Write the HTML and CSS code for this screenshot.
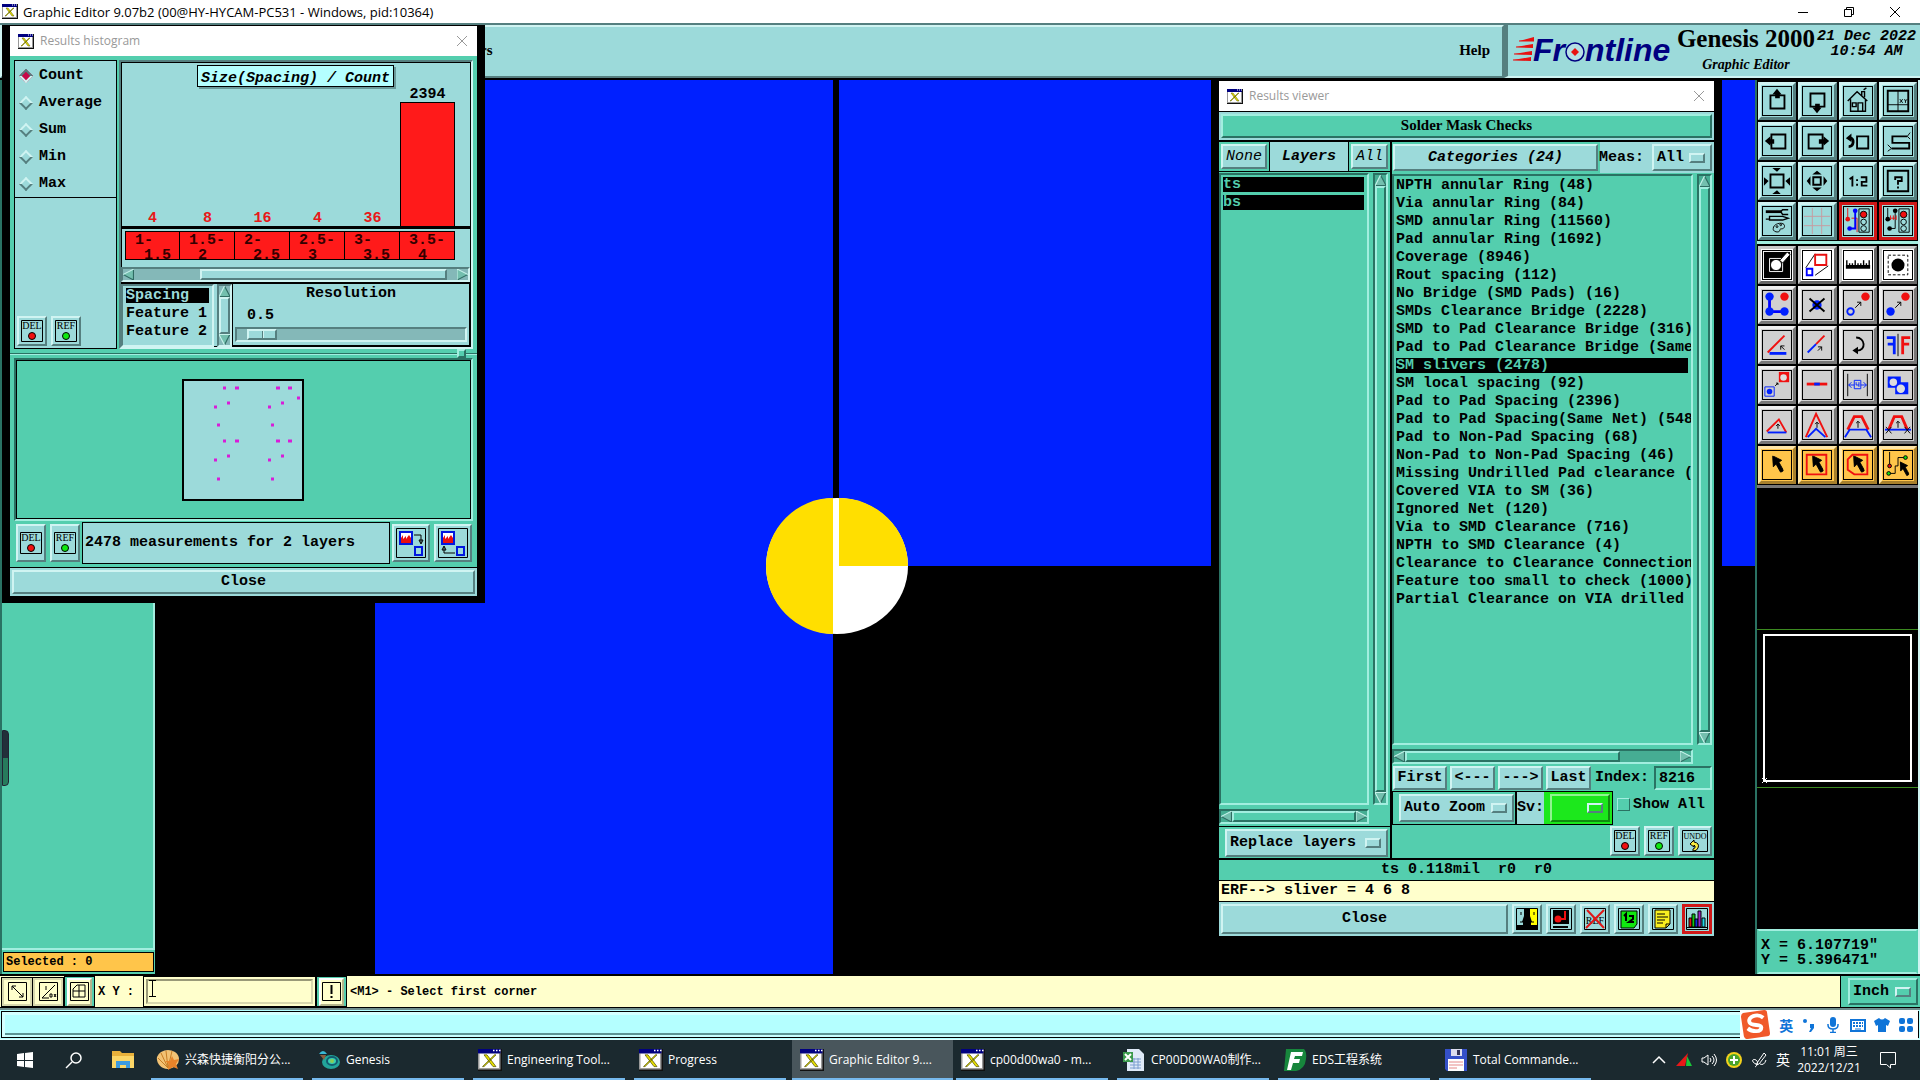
FILE: index.html
```html
<!DOCTYPE html>
<html lang="en">
<head>
    <meta charset="UTF-8">
    <meta name="viewport" content="width=device-width, initial-scale=1.0">
    <title>Graphic Editor</title>
    <link rel="stylesheet" href="styles.css">
</head>
<body>
    <!-- shared symbols -->
    <svg class="defs" aria-hidden="true">
        <symbol id="app" viewBox="0 0 16 15">
            <path d="M0 0h16v15H0z" fill="#111"/><path d="M0 0h15v14H0z" fill="#999"/><path d="M1 3h13v10H1z" fill="#fff"/>
            <path d="M0 0h15v3H0z" fill="#000080"/><path d="M10 1h1m1 0h1m1 0h1" stroke="#fff"/>
            <path d="M4 4h2l6 8h-2zM11 4h1l-8 8H3z" fill="#e8e000" stroke="#555500" stroke-width=".5"/>
        </symbol>
        <symbol id="x" viewBox="0 0 12 12"><path d="M1 1l10 10M11 1L1 11" stroke="currentColor" fill="none"/></symbol>
        <symbol id="del" viewBox="0 0 24 24">
            <path d="M1.500 1.500h21v21h-21z" fill="none" stroke="#000"/><text x="12" y="10" class="mini">DEL</text>
            <circle cx="12" cy="17" r="3.500" fill="#f01010" stroke="#000"/>
        </symbol>
        <symbol id="ref" viewBox="0 0 24 24">
            <path d="M1.500 1.500h21v21h-21z" fill="none" stroke="#000"/><text x="12" y="10" class="mini">REF</text>
            <circle cx="12" cy="17" r="3.500" fill="#10e810" stroke="#000"/>
        </symbol>
        <symbol id="up" viewBox="0 0 10 10"><path d="M5 0l5 10H0z" fill="#73bfae"/><path d="M0 9.500h10L5 0" stroke="#2f6b62" fill="none"/><path d="M5 0L0 10" stroke="#c8f3ec"/></symbol>
        <symbol id="down" viewBox="0 0 10 10"><path d="M5 10L0 0h10z" fill="#73bfae"/><path d="M10 0L5 10" stroke="#2f6b62"/><path d="M5 10L0 .5h10" stroke="#c8f3ec" fill="none"/></symbol>
        <symbol id="left" viewBox="0 0 10 10"><path d="M0 5l10-5v10z" fill="#73bfae"/><path d="M9.500 0v10L0 5" stroke="#2f6b62" fill="none"/><path d="M0 5l10-5" stroke="#c8f3ec"/></symbol>
        <symbol id="right" viewBox="0 0 10 10"><path d="M10 5L0 0v10z" fill="#73bfae"/><path d="M10 5L0 10" stroke="#2f6b62"/><path d="M0 10V0l10 5" stroke="#c8f3ec" fill="none"/></symbol>
        <symbol id="arrow" viewBox="0 0 12 18"><path d="M0 0l10 5-3 2 5 9-3 2-5-9-3 3z" fill="#000"/></symbol>
    </svg>

    <header class="titlebar">
        <svg class="app-icon"><use href="#app"/></svg>
        <span>Graphic Editor 9.07b2 (00@HY-HYCAM-PC531 - Windows, pid:10364)</span>
        <div class="win-buttons">
            <button aria-label="Minimize"><svg width="12" height="12"><path d="M1 6.500h10" stroke="#000"/></svg></button>
            <button aria-label="Restore"><svg width="12" height="12"><path d="M1.500 3.500h7v7h-7zM3.500 3V1.500h7v7H9" fill="none" stroke="#000"/></svg></button>
            <button aria-label="Close"><svg width="12" height="12"><use href="#x"/></svg></button>
        </div>
    </header>

    <div class="topbar">
        <nav class="menubar">
            <a href="#">rs</a>
            <a href="#">Help</a>
        </nav>
        <div class="brand">
            <svg class="logo" viewBox="0 0 162 40">
                <path d="M6 9l15-4v4zM3 15l17-3v4zM1 22l18-3v4zM0 28l18-3v4z" fill="#e81010"/>
                <path d="M6 9h15M3 15h17M1 22h18M0 28h18" stroke="#e81010"/>
                <text x="20" y="29" class="logo-text">Fr</text>
                <text x="72" y="29" class="logo-text">ntline</text>
                <circle cx="62" cy="20" r="9" fill="#b6dfe4" stroke="#000080" stroke-width="1.500"/>
                <path d="M62 16l4 4-4 4-4-4z" fill="#e81010"/>
            </svg>
            <div class="product"><strong>Genesis 2000</strong><em>Graphic Editor</em></div>
            <div class="date"><span>21 Dec 2022</span><span>10:54 AM</span></div>
        </div>
    </div>

    <main class="workspace">
        <aside class="layer-panel">
            <div class="layer-list"><i class="pill"></i></div>
            <div class="selected">Selected : 0</div>
        </aside>

        <svg class="board" viewBox="155 80 1600 894" preserveAspectRatio="xMidYMid slice">
            <path d="M155 80h1600v894H155z" fill="#000"/>
            <path d="M375 80h458v894H375zM839 80h916v486H839z" fill="#0020ff"/>
            <ellipse cx="837" cy="566" rx="71" ry="68" fill="#fff"/>
            <path d="M833 498v136a67 68 0 0 1 0-136zM839 498a69 68 0 0 1 69 68h-69z" fill="#ffdf00"/>
        </svg>

        <aside class="tool-panel">
            <div class="tools">
                <button class="tool" aria-label="Pan up"><svg viewBox="0 0 30 30"><path d="M8 9h15v14H8z" stroke-width="2"/><path d="M10 8l5-6 5 6h-2v4h-5V8z" class="k"/></svg></button>
                <button class="tool" aria-label="Pan down"><svg viewBox="0 0 30 30"><path d="M8 7h15v14H8z" stroke-width="2"/><path d="M10 22l5 6 5-6h-2v-4h-5v4z" class="k"/></svg></button>
                <button class="tool" aria-label="Home"><svg viewBox="0 0 30 30"><path d="M4 15L14 5l11 10M7 13v13h16V13M9 17h4v4H9zM15 26v-9h5v9M19 9V5h3v6M21 3l3-2" stroke-width="1.500"/></svg></button>
                <button class="tool" aria-label="Zoom XY"><svg viewBox="0 0 30 30"><path d="M4 4h22v22H4z" stroke-width="2"/><path d="M15 4v22M4 19h22M17 13l3 4m0-4l-3 4M22 13l1 2 2-2m-2 2v2"/></svg></button>
                <button class="tool" aria-label="Pan left"><svg viewBox="0 0 30 30"><path d="M9 8h15v15H9z" stroke-width="2"/><path d="M8 10l-6 5 6 5v-2h4v-5H8z" class="k"/></svg></button>
                <button class="tool" aria-label="Pan right"><svg viewBox="0 0 30 30"><path d="M6 8h15v15H6z" stroke-width="2"/><path d="M22 10l6 5-6 5v-2h-5v-5h5z" class="k"/></svg></button>
                <button class="tool" aria-label="Previous view"><svg viewBox="0 0 30 30"><path d="M14 10h12v13H14z" stroke-width="2"/><path d="M5 12h2c4 0 4 9-2 9" stroke-width="3"/><path d="M2 12l6-5v9z" class="k"/></svg></button>
                <button class="tool" aria-label="Serpentine"><svg viewBox="0 0 30 30"><path d="M25 10H9v7h18v6H8" stroke-width="2"/><path d="M25 10l3-4m-3 4l3 3M8 23l-4-4m4 4l-4 3"/></svg></button>
                <button class="tool" aria-label="Zoom out"><svg viewBox="0 0 30 30"><path d="M8 8h14v14H8z" stroke-width="2"/><path d="M10 1h9l-4 4zM10 29h9l-4-4zM1 11v9l5-5zM29 11v9l-5-5z" class="k"/></svg></button>
                <button class="tool" aria-label="Zoom in"><svg viewBox="0 0 30 30"><path d="M11 11h8v8h-8z" stroke-width="2"/><path d="M10 8l5-4 5 4zM10 22l5 4 5-4zM8 10l-4 5 4 5zM22 10l4 5-4 5z" class="k"/></svg></button>
                <button class="tool" aria-label="Zoom 1:2"><svg viewBox="0 0 30 30"><path d="M6 13l3-2v10M14 13v2m0 3v2M18 11h6v5h-5v4h6" stroke-width="2"/></svg></button>
                <button class="tool" aria-label="Query"><svg viewBox="0 0 30 30"><path d="M4 4h22v22H4zM12 14v-3h7v4h-4v4m0 2v2" stroke-width="2"/></svg></button>
                <button class="tool" aria-label="Setup"><svg viewBox="0 0 30 30"><path d="M3 5h17" stroke-width="3"/><path d="M27 3h-6l-2 2 2 3h6M3 13h4v-3h14l6 2-6 2H7v-2" stroke-width="1.500"/><path d="M11 23c0-6 13-8 12-2-1 4-5 1-5 4 0 3-8 2-7-2z"/><circle cx="15" cy="21" r="1"/><circle cx="19" cy="19" r="1"/></svg></button>
                <button class="tool" aria-label="Grid"><svg viewBox="0 0 30 30"><path d="M10 1v28M20 1v28M1 10h28M1 20h28" stroke="#c89a9e"/></svg></button>
                <button class="tool on" aria-label="Snap"><svg viewBox="0 0 30 30"><path d="M4 1v12M8 12h6v15" stroke="#e81010"/><path d="M12 4v19H7" stroke="#00f" stroke-width="2"/><circle cx="4" cy="13" r="2.500" fill="#e81010" stroke="none"/><circle cx="12" cy="4" r="2.500" fill="#00f" stroke="none"/><circle cx="6" cy="23" r="2.500" fill="#00f" stroke="none"/><path d="M16 2h11v25H16z"/><circle cx="21" cy="8" r="3.500" fill="#f01010"/><circle cx="21" cy="16" r="3"/><circle cx="21" cy="23" r="3"/></svg></button>
                <button class="tool on" aria-label="Online DRC"><svg viewBox="0 0 30 30"><path d="M4 1v12M12 4v19H6"/><path d="M7 12h6M7 9v5M10 9v5M13 9v5" stroke="#e81010"/><circle cx="4" cy="13" r="2.500" class="k"/><circle cx="12" cy="4" r="2.500" class="k"/><circle cx="6" cy="23" r="2.500" class="k"/><path d="M16 2h11v25H16z"/><circle cx="21" cy="8" r="3.500" fill="#f01010"/><circle cx="21" cy="16" r="3"/><circle cx="21" cy="23" r="3"/></svg></button>
            </div>
            <div class="tools edit">
                <button class="tool white" aria-label="Negative"><svg viewBox="0 0 30 30"><path d="M1 1h28v28H1z" class="k"/><path d="M7 8h14v14H7z" stroke="#fff"/><path d="M18 10l8-9 3 3-8 9z" fill="#fff"/><circle cx="14" cy="15" r="6" fill="#fff"/></svg></button>
                <button class="tool white" aria-label="Scale"><svg viewBox="0 0 30 30"><path d="M13 3L3 18M13 26l14-10"/><path d="M13 4h12v11H13z" stroke="#e81010" stroke-width="2"/><path d="M4 19h6v7H4z" stroke="#00f" stroke-width="2"/></svg></button>
                <button class="tool white" aria-label="Measure"><svg viewBox="0 0 30 30"><path d="M2 17h26" stroke-width="4"/><path d="M3 10v8m3-5v5m3-5v5m3-8v8m3-5v5m3-5v5m3-8v8m3-5v5m3-8v8" stroke-width="1.500"/></svg></button>
                <button class="tool white" aria-label="Select pad"><svg viewBox="0 0 30 30"><path d="M4.500 4.500h21v21h-21z" stroke-dasharray="3 2"/><circle cx="15" cy="15" r="7" class="k"/></svg></button>
                <button class="tool" aria-label="Move"><svg viewBox="0 0 30 30"><path d="M7 6v16h16" stroke="#00f" stroke-width="3"/><circle cx="7" cy="6" r="4.500" fill="#0020ff" stroke="none"/><circle cx="7" cy="22" r="4.500" fill="#0020ff" stroke="none"/><circle cx="23" cy="22" r="4.500" fill="#0020ff" stroke="none"/><circle cx="23" cy="6" r="4.500" fill="#f01010" stroke="none"/></svg></button>
                <button class="tool" aria-label="Delete"><svg viewBox="0 0 30 30"><circle cx="15" cy="15" r="5" fill="#0020ff" stroke="none"/><path d="M7 8l16 14M23 8L7 22" stroke-width="2"/></svg></button>
                <button class="tool" aria-label="Copy"><svg viewBox="0 0 30 30"><circle cx="7" cy="22" r="3.500" stroke="#0020ff" stroke-width="2"/><circle cx="23" cy="6" r="4.500" fill="#f01010" stroke="none"/><path d="M12 18l6-6m-4 0h4v4"/></svg></button>
                <button class="tool" aria-label="Move to"><svg viewBox="0 0 30 30"><circle cx="7" cy="22" r="4.500" fill="#0020ff" stroke="none"/><circle cx="23" cy="6" r="4.500" fill="#f01010" stroke="none"/><path d="M12 18l6-6m-4 0h4v4"/></svg></button>
                <button class="tool" aria-label="Rotate line"><svg viewBox="0 0 30 30"><path d="M5 23L23 5" stroke="#f01010" stroke-width="2"/><path d="M7 24h18" stroke="#0020ff" stroke-width="3"/><path d="M23 20l-4-4m0 4v-4h4"/></svg></button>
                <button class="tool" aria-label="Extend line"><svg viewBox="0 0 30 30"><path d="M14 14l9-9" stroke="#f01010" stroke-width="2"/><path d="M5 23l9-9" stroke="#0020ff" stroke-width="2"/><path d="M16 21l4-4m-4 0h4v4"/></svg></button>
                <button class="tool" aria-label="Rotate"><svg viewBox="0 0 30 30"><path d="M13 7c10 0 11 14 1 14" stroke-width="2"/><path d="M9 21l6-4v8z" class="k"/></svg></button>
                <button class="tool" aria-label="Mirror"><svg viewBox="0 0 30 30"><path d="M15 3v24"/><path d="M3 7h8v18M11 14H4" stroke="#0020ff" stroke-width="3"/><path d="M28 7h-8v18M20 14h7" stroke="#f01010" stroke-width="3"/></svg></button>
                <button class="tool" aria-label="Replace"><svg viewBox="0 0 30 30"><path d="M2 17h10v10H2z" stroke="#0020ff"/><circle cx="7" cy="22" r="3" fill="#0020ff" stroke="none"/><path d="M17 1h11v11H17z" fill="#f01010" stroke="none"/><circle cx="22" cy="7" r="3.500" fill="#ddd" stroke="none"/><path d="M13 16l3-3m-2 0h2v2"/></svg></button>
                <button class="tool" aria-label="Break"><svg viewBox="0 0 30 30"><path d="M4 14h22" stroke="#f01010" stroke-width="3"/><path d="M12 14h6" stroke="#0020ff" stroke-width="3"/></svg></button>
                <button class="tool" aria-label="Spacing"><svg viewBox="0 0 30 30"><path d="M4 3v24M25 3v24"/><path d="M5 15h6M18 15h6M8 12l-3 3 3 3M21 12l3 3-3 3M11 10h7v9h-7zM13 12v3h3m0-3v5" stroke="#0020ff"/></svg></button>
                <button class="tool" aria-label="Substitute"><svg viewBox="0 0 30 30"><path d="M4 6h14v6h8v13H12v-7H4z" fill="#0020ff" stroke="none"/><circle cx="10" cy="12" r="4" fill="#ddd" stroke="none"/><circle cx="18" cy="19" r="4.500" fill="#ddd" stroke="none"/></svg></button>
                <button class="tool" aria-label="Corner"><svg viewBox="0 0 30 30"><path d="M4 22L17 9l8 14" stroke="#f01010" stroke-width="2"/><path d="M5 23h20" stroke="#0020ff" stroke-width="2"/><path d="M16 19v-5m-2 2l2-2 2 2"/></svg></button>
                <button class="tool" aria-label="Corner stretch"><svg viewBox="0 0 30 30"><path d="M3 28L14 3l12 25" stroke="#f01010" stroke-width="2"/><path d="M5 28l9-9 10 9" stroke="#0020ff" stroke-width="2"/><path d="M15 18v-6m-2 2l2-2 2 2"/></svg></button>
                <button class="tool" aria-label="Trapezoid"><svg viewBox="0 0 30 30"><path d="M4 20L11 6h8l7 14" stroke="#f01010" stroke-width="3"/><path d="M1 28l5-8h18l5 8" stroke="#0020ff" stroke-width="2"/><path d="M15 18v-7m-2 2l2-2 2 2"/></svg></button>
                <button class="tool" aria-label="Trapezoid cut"><svg viewBox="0 0 30 30"><path d="M5 20L11 6h8l6 14" stroke="#f01010" stroke-width="3"/><path d="M1 20h28" stroke="#0020ff" stroke-width="2"/><path d="M15 18v-7m-2 2l2-2 2 2M2 17l6 7m0-7l-6 7M22 17l6 7m0-7l-6 7"/></svg></button>
                <button class="tool orange" aria-label="Select"><svg viewBox="0 0 30 30"><use href="#arrow" x="10" y="5" width="12" height="18"/></svg></button>
                <button class="tool orange" aria-label="Select in frame"><svg viewBox="0 0 30 30"><path d="M4 4h21v21H4z" stroke="#f01010" stroke-width="2"/><use href="#arrow" x="10" y="5" width="12" height="18"/></svg></button>
                <button class="tool orange" aria-label="Select in polygon"><svg viewBox="0 0 30 30"><path d="M9 4h16v21H11l-7-5V9z" stroke="#f01010" stroke-width="2"/><use href="#arrow" x="10" y="5" width="12" height="18"/></svg></button>
                <button class="tool orange" aria-label="Select net"><svg viewBox="0 0 30 30"><path d="M6 1v15M5 24h7v-8h3V7h8"/><circle cx="6" cy="16" r="2" fill="#e81010"/><circle cx="5" cy="24" r="2" fill="#10d810"/><circle cx="23" cy="7" r="2" fill="#10d810"/><use href="#arrow" x="17" y="11" width="10" height="16"/></svg></button>
            </div>
            <div class="overview">
                <div class="ov-frame"><div class="ov-view"><svg width="7" height="7"><path d="M1 1l5 5M6 1L1 6" stroke="#fff"/></svg></div></div>
            </div>
            <div class="coords"><span>X = 6.107719"</span><span>Y = 5.396471"</span></div>
        </aside>
    </main>

    <div class="command">
        <button class="cmd" aria-label="Resize"><svg width="19" height="19"><path d="M.5.5h18v18H.5zM4 4l11 11M4 8V4h4M15 11v4h-4"/></svg></button>
        <button class="cmd" aria-label="Relative"><svg width="19" height="19"><path d="M.5.5h18v18H.5zM3 16L16 3M3 16h7M7 4v4M11 12h2v3h-2zM15 12l2 3m0-3l-2 3"/></svg></button>
        <span class="cmd-cell"><button class="cmd up" aria-label="Grid snap"><svg width="19" height="19"><path d="M.5.500h18v18H.5zM3 15V7l4-4h8v12zM9 3v12M3 9h12"/></svg></button></span>
        <label for="xy">X Y :</label>
        <div class="xy-cell"><input id="xy" type="text"><svg class="caret" width="7" height="17"><path d="M0 .5h7M0 16.500h7M3.500 0v17" stroke="#000"/></svg></div>
        <span class="cmd-cell"><button class="cmd up" aria-label="Alert"><svg width="19" height="19"><path d="M.5.500h18v18H.5z"/><path d="M9.500 3v9m0 2v2" stroke-width="2"/></svg></button></span>
        <output>&lt;M1&gt; - Select first corner</output>
        <div class="unit"><span class="drop"><select aria-label="Units"><option>Inch</option></select></span></div>
    </div>

    <div class="statusbar">
        <div class="status-line"></div>
        <div class="ime">
            <svg class="sogou" viewBox="0 0 32 32"><path d="M3 4l22-3q3 0 3 3l3 21q0 3-3 3L8 31q-3 0-4-3L1 8q0-3 2-4z" fill="#f0592a"/><path d="M24 9c-6-5-17-1-14 5 2 4 12 1 12 5 0 5-9 5-14 1" stroke="#fff" stroke-width="4" fill="none"/></svg>
            <span>英</span>
            <svg width="16" height="16"><circle cx="4" cy="4" r="2"/><path d="M9 7h4v4l-3 4H8l2-4H9z"/></svg>
            <svg width="16" height="16"><rect x="5" y="0" width="6" height="10" rx="3"/><path d="M3 7v1q0 4 5 4t5-4V7M8 12v4M5 15.500h6" fill="none" stroke="#0f74d8" stroke-width="1.500"/></svg>
            <svg width="16" height="16"><path d="M1 3h14v11H1z" fill="none" stroke="#0f74d8" stroke-width="2"/><path d="M3 6h10M3 9h10" stroke="#0f74d8" stroke-width="2" stroke-dasharray="2 1"/><path d="M5 12h6" stroke="#0f74d8"/></svg>
            <svg width="16" height="16"><path d="M5 1q3 3 6 0l5 3-2 5-2-1v7H4V8L2 9 0 4z"/></svg>
            <svg width="16" height="16"><rect x="1" y="1" width="6" height="6" rx="2"/><rect x="9" y="1" width="6" height="6" rx="2"/><rect x="1" y="9" width="6" height="6" rx="2"/><rect x="9" y="9" width="6" height="6" rx="2"/></svg>
        </div>
    </div>

    <footer class="taskbar">
        <button class="sys" aria-label="Start"><svg width="16" height="16"><path d="M0 2l7-1v7H0zM8 1l8-1v8H8zM0 9h7v6l-7-1zM8 9h8v7l-8-1z" fill="#fff"/></svg></button>
        <button class="sys" aria-label="Search"><svg width="18" height="18"><circle cx="11" cy="7" r="5" fill="none" stroke="#fff" stroke-width="1.500"/><path d="M7 11l-6 6" stroke="#fff" stroke-width="1.500"/></svg></button>
        <button class="sys" aria-label="Explorer"><svg width="22" height="20"><path d="M0 1h8l2 2h12v15H0z" fill="#e9b13b"/><path d="M0 6h22v12H0z" fill="#fcd667"/><path d="M4 18v-7h14v7h-4v-3H8v3z" fill="#3d9be0"/></svg></button>
        <div class="tasks">
            <button class="task"><svg viewBox="0 0 24 22"><path d="M12 20C4 20 0 13 1 8q1-3 4-5 7-4 14 0 4 3 4 7 0 8-11 10z" fill="#f2c274"/><path d="M12 19L5 4M12 19L10 2M12 19l4-17M12 19L2 9" stroke="#c67d25"/><path d="M16 7l2 4 5-1-3 5 2 5-5-2-5 3 1-6-4-3h5z" fill="#e8832a"/></svg><span>兴森快捷衡阳分公...</span></button>
            <button class="task"><svg viewBox="0 0 24 22"><ellipse cx="14" cy="13" rx="9" ry="7" fill="#22a59a"/><ellipse cx="15" cy="12" rx="5" ry="4" fill="#38d0b4" stroke="#125b70" stroke-width="2"/><circle cx="15" cy="12" r="2" fill="#8c5"/><path d="M2 5q4-6 8 0z" fill="#39b8d4"/><path d="M3 6h6l-2 5z" fill="#8a6040"/></svg><span>Genesis</span></button>
            <button class="task"><svg viewBox="0 0 16 15" preserveAspectRatio="none"><use href="#app"/></svg><span>Engineering Tool...</span></button>
            <button class="task"><svg viewBox="0 0 16 15" preserveAspectRatio="none"><use href="#app"/></svg><span>Progress</span></button>
            <button class="task active"><svg viewBox="0 0 16 15" preserveAspectRatio="none"><use href="#app"/></svg><span>Graphic Editor 9....</span></button>
            <button class="task"><svg viewBox="0 0 16 15" preserveAspectRatio="none"><use href="#app"/></svg><span>cp00d00wa0 - m...</span></button>
            <button class="task"><svg viewBox="0 0 24 22"><path d="M5 0h12l5 5v17H5z" fill="#dfeaf8"/><path d="M8 10h11M8 13h11M8 16h11M8 19h11M12 9v11M16 9v11" stroke="#7d9ed0"/><path d="M1 3h10v10H1z" fill="#3b9a4c"/><path d="M3 5l6 6M9 5l-6 6" stroke="#fff" stroke-width="2"/></svg><span>CP00D00WA0制作...</span></button>
            <button class="task"><svg viewBox="0 0 24 22"><path d="M3 0h18q3 3 2 10-1 10-10 12H1z" fill="#17863c"/><path d="M8 3h12l-1 4h-7l-1 3h6l-1 4h-6l-2 7H4z" fill="#fff"/></svg><span>EDS工程系统</span></button>
            <button class="task"><svg viewBox="0 0 24 22"><path d="M1 0h22v22H3l-2-2z" fill="#3550c8"/><path d="M7 0h11v7H7z" fill="#dde"/><path d="M13 1h3v5h-3z" fill="#335"/><path d="M4 10h16v12H4z" fill="#fff"/><path d="M5 13h14M5 16h14M5 19h8" stroke="#e58a8a"/></svg><span>Total Commande...</span></button>
        </div>
        <div class="tray">
            <svg viewBox="0 0 16 16"><path d="M2 11l6-6 6 6" fill="none" stroke="#fff" stroke-width="1.500"/></svg>
            <svg viewBox="0 0 16 16"><path d="M0 14L12 1 9 14z" fill="#e81818"/><path d="M11 4l5 10h-6z" fill="#18c838"/></svg>
            <svg viewBox="0 0 16 16"><path d="M1 6h2l4-3v10l-4-3H1zM9 6q2 2 0 4M11 4q4 4 0 8M13 2q5 6 0 12" fill="none" stroke="#fff"/></svg>
            <svg viewBox="0 0 16 16"><circle cx="8" cy="8" r="8" fill="#f4d21c"/><circle cx="8" cy="8" r="6" fill="#4aa32c"/><path d="M8 4v8M4 8h8" stroke="#fff" stroke-width="2"/></svg>
            <svg viewBox="0 0 16 16"><path d="M5 12c-5-2-4-6 0-4 3 2 1 6-1 7M6 11l7-10 2 2-7 9-3 1zM9 12q4 2 6-4" fill="none" stroke="#fff"/></svg>
            <span>英</span>
        </div>
        <div class="clock"><span>11:01 周三</span><span>2022/12/21</span></div>
        <button class="notify" aria-label="Notifications"><svg width="18" height="18"><path d="M1.500 1.500h15v12h-5V17l-4-3.500h-6z" fill="none" stroke="#fff"/></svg></button>
    </footer>

    <!-- results histogram window -->
    <section class="window histogram">
        <div class="window-title"><svg class="app-icon"><use href="#app"/></svg><span>Results histogram</span><button aria-label="Close window"><svg width="12" height="12"><use href="#x"/></svg></button></div>
        <div class="hist-top">
            <div class="hist-side">
                <fieldset>
                    <label><input type="radio" name="stat" checked>Count</label>
                    <label><input type="radio" name="stat">Average</label>
                    <label><input type="radio" name="stat">Sum</label>
                    <label><input type="radio" name="stat">Min</label>
                    <label><input type="radio" name="stat">Max</label>
                </fieldset>
                <div class="pair">
                    <button class="btn icon" aria-label="Delete"><svg><use href="#del"/></svg></button>
                    <button class="btn icon" aria-label="Refresh"><svg><use href="#ref"/></svg></button>
                </div>
            </div>
            <div class="hist-main">
                <h2>Size(Spacing) / Count</h2>
                <div class="bars">
                    <div><b>4</b></div><div><b>8</b></div><div><b>16</b></div><div><b>4</b></div><div><b>36</b></div>
                    <div class="tall"><b>2394</b><i></i></div>
                </div>
                <div class="ranges">
                    <div>1-<span>1.5</span></div><div>1.5-<span>2</span></div><div>2-<span>2.5</span></div>
                    <div>2.5-<span>3</span></div><div>3-<span>3.5</span></div><div>3.5-<span>4</span></div>
                </div>
                <div class="hscroll cyan range-scroll"><svg><use href="#left"/></svg><i></i><svg><use href="#right"/></svg></div>
                <div class="hist-options">
                    <ul class="list"><li class="picked">Spacing</li><li>Feature 1</li><li>Feature 2</li></ul>
                    <div class="vscroll cyan"><svg><use href="#up"/></svg><i></i><svg><use href="#down"/></svg></div>
                    <div class="resolution">
                        <label for="res">Resolution</label>
                        <output>0.5</output>
                        <input id="res" type="range" min="0" max="10" step="0.5" value="0.5">
                    </div>
                </div>
            </div>
        </div>
        <div class="sash"><i></i></div>
        <div class="map">
            <svg width="122" height="122"><path d="M1 1h120v120H1z" fill="#9cdada" stroke="#000" stroke-width="2"/>
            <path d="M41 9h3M53 9h4M94 9h4M106 9h4M115 19h3M45 24h3M99 24h3M32 28h3M86 28h3M35 46h3M89 46h3M41 62h3M53 62h4M94 62h4M106 62h4M45 77h3M99 77h3M32 81h3M86 81h3M35 100h3M89 100h3" stroke="#d81cd8" stroke-width="3"/></svg>
        </div>
        <div class="hist-info">
            <button class="btn icon" aria-label="Delete"><svg><use href="#del"/></svg></button>
            <button class="btn icon" aria-label="Refresh"><svg><use href="#ref"/></svg></button>
            <p>2478 measurements for 2 layers</p>
            <button class="btn wide" aria-label="Histogram to view"><svg viewBox="0 0 30 30"><path d="M.5.5h29v29H.5z" fill="none" stroke="#000"/><path d="M4 4h12v12H4z" fill="#fff" stroke="#0018e0" stroke-width="2"/><path d="M5 15v-5l2-3v4l3-3v3l3-4 2 3v5z" fill="#e81010"/><path d="M19 19h7v8h-7z" fill="none" stroke="#0018e0" stroke-width="2"/><path d="M18 7h7v8m-2-3l2 4 2-4z" fill="none" stroke="#000"/></svg></button>
            <button class="btn wide" aria-label="View to histogram"><svg viewBox="0 0 30 30"><path d="M.5.5h29v29H.5z" fill="none" stroke="#000"/><path d="M4 4h12v12H4z" fill="#fff" stroke="#0018e0" stroke-width="2"/><path d="M5 15v-5l2-3v4l3-3v3l3-4 2 3v5z" fill="#e81010"/><path d="M19 19h7v8h-7z" fill="none" stroke="#0018e0" stroke-width="2"/><path d="M17 25H6v-6m-2 3l2-4 2 4z" fill="none" stroke="#000"/></svg></button>
        </div>
        <div class="close-row"><button class="btn">Close</button></div>
    </section>

    <!-- results viewer window -->
    <section class="window viewer">
        <div class="window-title"><svg class="app-icon"><use href="#app"/></svg><span>Results viewer</span><button aria-label="Close window"><svg width="12" height="12"><use href="#x"/></svg></button></div>
        <div class="check-name"><button class="btn">Solder Mask Checks</button></div>
        <div class="view-body">
            <div class="layers">
                <div class="layers-head"><button class="btn">None</button><span>Layers</span><button class="btn">All</button></div>
                <div class="list-area">
                    <ul class="list"><li class="picked">ts</li><li class="picked">bs</li></ul>
                    <div class="vscroll"><svg><use href="#up"/></svg><i></i><svg><use href="#down"/></svg></div>
                    <div class="hscroll"><svg><use href="#left"/></svg><i></i><svg><use href="#right"/></svg></div>
                </div>
                <div class="replace"><span class="drop"><select aria-label="Layer mode"><option>Replace layers</option></select></span></div>
            </div>
            <div class="categories">
                <div class="cat-head"><button class="btn">Categories (24)</button><label for="meas">Meas:</label><span class="drop"><select id="meas"><option>All</option></select></span></div>
                <div class="list-area">
                    <ul class="list">
                        <li>NPTH annular Ring (48)</li>
                        <li>Via annular Ring (84)</li>
                        <li>SMD annular Ring (11560)</li>
                        <li>Pad annular Ring (1692)</li>
                        <li>Coverage (8946)</li>
                        <li>Rout spacing (112)</li>
                        <li>No Bridge (SMD Pads) (16)</li>
                        <li>SMDs Clearance Bridge (2228)</li>
                        <li>SMD to Pad Clearance Bridge (316)</li>
                        <li>Pad to Pad Clearance Bridge (Same</li>
                        <li class="picked">SM slivers (2478)</li>
                        <li>SM local spacing (92)</li>
                        <li>Pad to Pad Spacing (2396)</li>
                        <li>Pad to Pad Spacing(Same Net) (548</li>
                        <li>Pad to Non-Pad Spacing (68)</li>
                        <li>Non-Pad to Non-Pad Spacing (46)</li>
                        <li>Missing Undrilled Pad clearance (</li>
                        <li>Covered VIA to SM (36)</li>
                        <li>Ignored Net (120)</li>
                        <li>Via to SMD Clearance (716)</li>
                        <li>NPTH to SMD Clearance (4)</li>
                        <li>Clearance to Clearance Connection</li>
                        <li>Feature too small to check (1000)</li>
                        <li>Partial Clearance on VIA drilled</li>
                    </ul>
                    <div class="vscroll"><svg><use href="#up"/></svg><i></i><svg><use href="#down"/></svg></div>
                    <div class="hscroll part"><svg><use href="#left"/></svg><i></i><svg><use href="#right"/></svg></div>
                </div>
                <div class="steps">
                    <button class="btn">First</button><button class="btn">&lt;---</button><button class="btn">---&gt;</button><button class="btn">Last</button>
                    <label for="idx">Index:</label><input id="idx" type="text" value="8216">
                </div>
                <div class="zoom-row">
                    <div class="boxed"><span class="drop"><select aria-label="Zoom mode"><option>Auto Zoom</option></select></span></div>
                    <div class="boxed sv"><label for="sv">Sv:</label><div><span class="drop"><select id="sv"><option></option></select></span></div></div>
                    <label class="show-all"><input type="checkbox">Show All</label>
                </div>
                <div class="edit-row">
                    <button class="btn icon" aria-label="Delete"><svg><use href="#del"/></svg></button>
                    <button class="btn icon" aria-label="Refresh"><svg><use href="#ref"/></svg></button>
                    <button class="btn undo" aria-label="Undo"><svg viewBox="0 0 28 24"><path d="M1.500 1.500h25v21h-25z" fill="none" stroke="#000"/><text x="14" y="10" class="mini small">UNDO</text><path d="M9 15l4-4v2q6 1 4 6-1 3-5 3v-2q3-1 2-3l-1-1v2z" fill="#f8ec40" stroke="#000"/></svg></button>
                </div>
            </div>
        </div>
        <pre class="measure">ts 0.118mil  r0  r0</pre>
        <div class="erf">ERF--&gt; sliver = 4 6 8</div>
        <div class="view-foot">
            <button class="btn grow">Close</button>
            <button class="btn icon" aria-label="Profile"><svg viewBox="0 0 24 24"><path d="M1 1h11v22H1z" fill="#9cdada"/><path d="M12 1h11v22H12z" fill="#ff0"/><path d="M9 1h6v8l2 6h-1v3h7v5H1v-5h7v-3H7l2-6z"/><path d="M6 5v3M5 15h3M19 5v3M16 15h3" stroke="#000"/><path d="M1.500 1.500h21v21h-21z" fill="none" stroke="#000"/></svg></button>
            <button class="btn icon" aria-label="Snapshot"><svg viewBox="0 0 24 24"><path d="M1.500 1.500h21v21h-21z" fill="none" stroke="#000"/><path d="M4 3h16v14H4z"/><circle cx="9" cy="12" r="3.500" fill="#f01010"/><path d="M11 12h5V4" stroke="#f01010" stroke-width="2" fill="none"/><path d="M4 20h15" stroke="#000" stroke-width="2"/></svg></button>
            <button class="btn icon" aria-label="No reference"><svg viewBox="0 0 24 24"><path d="M1.500 1.500h21v21h-21z" fill="none" stroke="#000"/><text x="12" y="17" class="mini">REF</text><path d="M4 3l17 18M21 3L3 21" stroke="#e01818" stroke-width="2"/></svg></button>
            <button class="btn icon" aria-label="Numbered"><svg viewBox="0 0 24 24"><path d="M1.500 1.500h21v21h-21z" fill="none" stroke="#000"/><path d="M4 4h16v13l-3 4H4z" fill="#10e810" stroke="#000"/><path d="M7 9l2-2v7M12 9h4v3l-4 3h5" fill="none" stroke="#000" stroke-width="2"/></svg></button>
            <button class="btn icon" aria-label="Report"><svg viewBox="0 0 24 24"><path d="M1.500 1.500h21v21h-21z" fill="none" stroke="#000"/><path d="M4 3h15v14l-4 4H4z" fill="#f8f020" stroke="#000"/><path d="M6 7h8M6 10h11M6 13h8M6 16h6M15 21v-4h4" stroke="#000" fill="none"/></svg></button>
            <button class="btn icon hot" aria-label="Histogram"><svg viewBox="0 0 24 24"><path d="M1.500 1.500h21v21h-21z" fill="none" stroke="#000"/><path d="M2 20.500h20" stroke="#000"/><path d="M4 11h3v9H4z" fill="#e81010" stroke="#000"/><path d="M7 7h3v13H7z" fill="#10c810" stroke="#000"/><path d="M10 12h3v8h-3z" fill="#1030e0" stroke="#000"/><path d="M13 4h3v16h-3z" fill="#a020c0" stroke="#000"/><path d="M17 11h3v9h-3z" fill="#20d8e8" stroke="#000"/></svg></button>
        </div>
    </section>
</body>
</html>
```
FILE: styles.css
```css
:root {
    --green: #54ceae;
    --green-hi: #a2eedf;
    --green-lo: #2a7263;
    --cyan: #9cdada;
    --cyan-hi: #d0f4f2;
    --cyan-lo: #557f7f;
    --cream: #ffffcc;
    --mono: "Liberation Mono", "Noto Sans CJK SC", monospace;
    --serif: "Liberation Serif", serif;
    --ui: "Open Sans", "Noto Sans CJK SC", sans-serif;
}

* {
    box-sizing: border-box;
}

body {
    margin: 0;
    height: 100vh;
    display: flex;
    flex-direction: column;
    position: relative;
    overflow: hidden;
    background: #000;
    font: bold 15px/18px var(--mono);
    color: #000;
}

button,
input,
select {
    font: inherit;
    color: inherit;
    padding: 0;
    margin: 0;
    border: 0;
    background: none;
    border-radius: 0;
}

svg {
    display: block;
    flex: none;
}

ul,
p,
h2,
pre {
    margin: 0;
    padding: 0;
    list-style: none;
    font: inherit;
}

a {
    color: inherit;
    text-decoration: none;
}

.defs {
    position: absolute;
    width: 0;
    height: 0;
}

.mini {
    font: 10px var(--serif);
    text-anchor: middle;
    fill: #000;
}

.small {
    font-size: 8px;
}

/* title bars */
.titlebar,
.window-title {
    display: flex;
    align-items: center;
    background: #fff;
    font: 12px/18px var(--ui);
}

.titlebar {
    height: 23px;
    flex: none;
    padding-left: 2px;
    gap: 5px;
    font-size: 13px;
}

.app-icon {
    width: 16px;
    height: 15px;
}

.win-buttons {
    display: flex;
    margin-left: auto;
    padding-right: 2px;
}

.win-buttons button {
    width: 46px;
    display: flex;
    justify-content: center;
}

.window-title {
    height: 30px;
    flex: none;
    padding: 0 9px 0 8px;
    gap: 6px;
    color: #999;
}

.window-title button {
    margin-left: auto;
}

/* menu and brand */
.topbar {
    display: flex;
    height: 57px;
    flex: none;
    border-top: 2px solid var(--cyan-lo);
    border-bottom: 2px solid #000;
    font: bold 15px/18px var(--serif);
}

.menubar {
    flex: 1;
    display: flex;
    justify-content: space-between;
    align-items: center;
    padding: 0 12px 3px 478px;
    background: var(--cyan);
    border: 2px solid;
    border-color: var(--cyan-hi) var(--cyan-lo) var(--cyan-lo) var(--cyan-hi);
}

.brand {
    display: flex;
    width: 416px;
    padding: 1px 4px 0 5px;
    background: var(--cyan);
    border-left: 4px solid var(--cyan-lo);
    border-bottom: 2px solid var(--cyan-hi);
    white-space: nowrap;
}

.logo {
    width: 162px;
    height: 40px;
    margin-top: 6px;
}

.logo-text {
    font: italic bold 32px "Liberation Sans", sans-serif;
    fill: #000080;
}

.product {
    display: flex;
    flex-direction: column;
    align-items: center;
    flex: 1;
}

.product strong {
    font-size: 25px;
    line-height: 26px;
}

.product em {
    font-size: 14px;
    line-height: 26px;
}

.date {
    display: flex;
    flex-direction: column;
    align-items: center;
    flex: none;
    font: italic bold 15px/15px var(--mono);
    padding-top: 3px;
}

/* main area */
.workspace {
    flex: 1;
    min-height: 0;
    display: flex;
}

.layer-panel {
    width: 155px;
    flex: none;
    display: flex;
    flex-direction: column;
    background: var(--green);
    border-left: 2px solid var(--green-lo);
}

.layer-list {
    flex: 1;
    display: flex;
    border: 1px solid var(--green-hi);
    border-width: 0 2px 2px 0;
}

.pill {
    width: 7px;
    height: 56px;
    margin-top: 650px;
    border-radius: 0 4px 4px 0;
    background: linear-gradient(#22303a 50%, #277a5c 50%);
    border: 1px solid #223;
}

.selected {
    margin: 2px 1px 2px 1px;
    padding-left: 2px;
    background: #ffc54a;
    border: 1px solid #000;
    font-size: 12px;
    line-height: 18px;
}

.board {
    flex: 1;
    min-width: 0;
    height: 100%;
}

.tool-panel {
    width: 165px;
    flex: none;
    display: flex;
    flex-direction: column;
    background: var(--green);
    border: solid;
    border-width: 0 2px 0 2px;
    border-color: var(--green-hi) var(--cyan-hi) var(--green-hi) var(--green-lo);
}

.tools {
    display: grid;
    grid-template-columns: repeat(4, 1fr);
    gap: 2px;
    padding: 2px 1px 1px;
    background: #000;
    border-bottom: 3px solid var(--green-hi);
}

.edit {
    border-bottom-color: #777;
}

.tool {
    height: 38px;
    display: grid;
    place-items: center;
    background: var(--cyan);
    border: 3px solid;
    border-color: var(--cyan-hi) var(--cyan-lo) var(--cyan-lo) var(--cyan-hi);
}

.tool svg {
    width: 30px;
    height: 30px;
    border: 1px solid #000;
    fill: none;
    stroke: #000;
}

.k {
    fill: #000;
    stroke: none;
}

.tool.on {
    border-color: #d01818;
}

.edit .tool {
    background: #d0d0d0;
    border-color: #efefef #777 #777 #efefef;
}

.edit .white {
    background: #fff;
    border-color: #c8c8c8 #666 #666 #c8c8c8;
}

.edit .orange {
    background: #ffc54a;
    border-color: #ffe6a8 #a8802c #a8802c #ffe6a8;
}

.overview {
    flex: 1;
    display: flex;
    align-items: center;
    background: #000;
}

.ov-frame {
    flex: 1;
    height: 159px;
    padding: 4px 6px;
    border: 1px solid #3c8a20;
    border-width: 1px 0;
}

.ov-view {
    height: 148px;
    border: 2px solid #fff;
    display: flex;
    align-items: flex-end;
}

.ov-view svg {
    position: relative;
    left: -4px;
    top: 4px;
}

.coords {
    height: 45px;
    display: flex;
    flex-direction: column;
    justify-content: center;
    padding: 2px 0 0 2px;
    line-height: 15px;
    border: 2px solid;
    border-color: var(--green-hi) transparent var(--green-hi) transparent;
}

/* command line */
.command {
    height: 34px;
    flex: none;
    display: flex;
    align-items: center;
    background: var(--cream);
    border-top: 2px solid #000;
    border-bottom: 1px solid #000;
    font-size: 12px;
    padding-left: 2px;
}

.cmd {
    width: 30px;
    height: 28px;
    display: grid;
    place-items: center;
    background: var(--cream);
    border: 2px solid #d8d8ae;
    outline: 1px solid #000;
    margin-right: 1px;
}

.cmd svg {
    fill: none;
    stroke: #000;
}

.cmd-cell {
    display: flex;
    align-items: center;
    height: 100%;
    padding: 0 2px;
    background: var(--green);
    border: 1px solid #000;
}

.cmd.up {
    width: 25px;
    margin: 0;
    outline: 0;
    border-color: #fff #b5b58c #b5b58c #fff;
}

.command label {
    width: 48px;
    padding-left: 3px;
    white-space: pre;
}

.xy-cell {
    width: 173px;
    height: 100%;
    padding: 2px;
    border: 1px solid #000;
    position: relative;
}

.xy-cell input {
    width: 100%;
    height: 100%;
    padding-left: 4px;
    border: 2px solid;
    border-color: #9a9a78 #d8d8ae #d8d8ae #9a9a78;
}

.caret {
    position: absolute;
    left: 5px;
    top: 3px;
}

.command output {
    flex: 1;
    padding-left: 3px;
}

.unit {
    width: 80px;
    height: 100%;
    padding: 2px 2px 2px 7px;
    background: var(--green);
    border-left: 1px solid #000;
    font-size: 15px;
}

.unit .drop {
    height: 27px;
    background: var(--green);
    border-color: var(--green-hi) var(--green-lo) var(--green-lo) var(--green-hi);
}

.statusbar {
    height: 32px;
    flex: none;
    display: flex;
    padding: 1px;
    background: #b4ffff;
    border-top: 2px solid #6f8e8e;
    border-bottom: 1px solid #e0ffff;
    position: relative;
}

.status-line {
    flex: 1;
    border: 1px solid #000;
    box-shadow: inset 0 3px #d4ffff, inset 3px 0 #d4ffff, inset 0 -2px #c8ffff, inset 0 -4px #5c9494;
}

.ime {
    position: absolute;
    right: 2px;
    top: 0;
    bottom: 0;
    width: 178px;
    display: flex;
    align-items: center;
    justify-content: space-between;
    padding-right: 4px;
    background: #fff;
    fill: #0f74d8;
    color: #0f74d8;
    font: bold 14px/20px "Noto Sans CJK SC", sans-serif;
}

.sogou {
    width: 31px;
    height: 31px;
}

/* taskbar */
.taskbar {
    height: 40px;
    flex: none;
    display: flex;
    align-items: center;
    background: #1b292f;
    color: #fff;
    font: 12px/16px var(--ui);
}

.sys {
    width: 49px;
    height: 100%;
    display: grid;
    place-items: center;
}

.tasks {
    display: flex;
    height: 100%;
    padding-left: 1px;
}

.task {
    width: 161px;
    display: flex;
    align-items: center;
    gap: 5px;
    padding-left: 8px;
    white-space: nowrap;
    background: linear-gradient(#76b9ed, #76b9ed) 3px 100% / 152px 2px no-repeat;
}

.task svg {
    width: 24px;
    height: 22px;
}

.task.active {
    background: linear-gradient(#76b9ed, #76b9ed) 0 100% / 100% 2px no-repeat #49565c;
}

.tray {
    margin-left: auto;
    display: flex;
    align-items: center;
    gap: 9px;
}

.tray svg {
    width: 16px;
    height: 16px;
}

.tray span {
    font-size: 14px;
}

.clock {
    width: 78px;
    display: flex;
    flex-direction: column;
    align-items: center;
}

.notify {
    width: 40px;
    height: 100%;
    display: grid;
    place-items: center;
    margin-right: 12px;
}

/* Motif widgets */
.btn,
.drop {
    display: flex;
    align-items: center;
    justify-content: center;
    background: var(--cyan);
    border: 2px solid;
    border-color: var(--cyan-hi) var(--cyan-lo) var(--cyan-lo) var(--cyan-hi);
    white-space: nowrap;
}

.drop {
    justify-content: space-between;
    padding: 0 5px 0 3px;
}

.drop select {
    appearance: none;
    flex: 1;
    min-width: 0;
}

.drop::after {
    content: "";
    width: 12px;
    height: 6px;
    border: 2px solid;
    border-color: var(--cyan-hi) var(--cyan-lo) var(--cyan-lo) var(--cyan-hi);
    pointer-events: none;
}

.icon {
    width: 30px;
    height: 30px;
    flex: none;
}

.icon svg {
    width: 24px;
    height: 24px;
}

.hot {
    border: 3px solid #d01818;
}

.list {
    overflow: hidden;
    white-space: nowrap;
    border: 2px solid;
    border-color: var(--green-lo) var(--green-hi) var(--green-hi) var(--green-lo);
    padding: 1px 3px;
}

.list li {
    line-height: 15px;
    height: 15px;
    margin-bottom: 3px;
}

.list .picked {
    background: #000;
    color: var(--green-hi);
}

.vscroll,
.hscroll {
    display: flex;
    background: #46ad93;
    border: 2px solid;
    border-color: var(--green-lo) var(--green-hi) var(--green-hi) var(--green-lo);
}

.vscroll {
    width: 15px;
    flex-direction: column;
}

.hscroll {
    height: 15px;
}

.vscroll svg,
.hscroll svg {
    width: 11px;
    height: 11px;
}

.vscroll i,
.hscroll i {
    flex: 1;
    background: var(--green);
    border: 2px solid;
    border-color: var(--green-hi) var(--green-lo) var(--green-lo) var(--green-hi);
}

.hscroll.part i {
    margin-right: 60px;
}

.cyan {
    background: #84b8b8;
    border-color: var(--cyan-lo) var(--cyan-hi) var(--cyan-hi) var(--cyan-lo);
}

.cyan i {
    background: var(--cyan);
    border-color: var(--cyan-hi) var(--cyan-lo) var(--cyan-lo) var(--cyan-hi);
}

/* floating windows */
.window {
    position: absolute;
    display: flex;
    flex-direction: column;
    border: solid #000;
    border-width: 1px 8px 7px 8px;
    background: var(--green);
}

/* results histogram */
.histogram {
    left: 2px;
    top: 25px;
    width: 483px;
    height: 578px;
}

.hist-top {
    display: flex;
    gap: 2px;
    margin: 4px 4px 0;
    height: 289px;
}

.hist-side {
    width: 103px;
    display: flex;
    flex-direction: column;
    justify-content: space-between;
    background: var(--cyan);
    border: 1px solid #000;
}

.hist-side fieldset {
    margin: 0;
    padding: 1px 3px 0;
    border: 0;
    border-bottom: 1px solid #000;
}

.hist-side label {
    display: flex;
    align-items: center;
    gap: 8px;
    height: 27px;
}

.hist-side input {
    appearance: none;
    width: 10px;
    height: 10px;
    margin: 0 0 0 3px;
    transform: rotate(45deg);
    border: 2px solid;
    border-color: var(--cyan-hi) var(--cyan-lo) var(--cyan-lo) var(--cyan-hi);
}

.hist-side input:checked {
    background: #c80848;
    border-color: var(--cyan-lo) var(--cyan-hi) var(--cyan-hi) var(--cyan-lo);
}

.pair {
    display: flex;
    gap: 4px;
    padding: 2px;
}

.hist-main {
    flex: 1;
    min-width: 0;
    display: flex;
    flex-direction: column;
    background: var(--cyan);
    border: 2px solid;
    border-color: var(--cyan-lo) var(--cyan-hi) var(--cyan-hi) var(--cyan-lo);
    box-shadow: inset 0 0 0 1px #000;
    padding: 1px 1px 0 0;
}

.hist-main h2 {
    align-self: center;
    margin-top: 2px;
    padding: 4px 3px 0;
    height: 22px;
    font-style: italic;
    line-height: 17px;
    background: #b4ffff;
    border: 1px solid #000;
    box-shadow: 2px 2px #6a9a9a;
}

.bars {
    flex: 1;
    display: grid;
    grid-template-columns: repeat(6, 55px);
    padding-left: 4px;
    border-bottom: 3px solid #000;
    text-align: center;
    color: #e81818;
}

.bars div {
    display: flex;
    flex-direction: column;
    justify-content: flex-end;
}

.bars b {
    line-height: 14px;
}

.bars .tall {
    color: #000;
}

.tall i {
    height: 124px;
    background: #ff1a1a;
    border: 1px solid #000;
    border-bottom: 0;
}

.ranges {
    display: grid;
    grid-template-columns: repeat(6, 55px);
    margin: 2px 0 7px 4px;
    line-height: 15px;
    color: #300;
}

.ranges div {
    height: 29px;
    padding: 1px 0 0 9px;
    background: #ff1a1a;
    border: 1px solid #000;
    border-left-width: 0;
}

.ranges div:first-child {
    border-left-width: 1px;
}

.ranges span {
    display: block;
    padding-left: 9px;
}

.range-scroll i {
    margin: 0 10px 0 66px;
}

.hist-options {
    display: flex;
    height: 65px;
    border: 1px solid #000;
    border-width: 2px 0 0;
}

.hist-options .list {
    width: 93px;
    border-color: var(--cyan-lo) var(--cyan-hi) var(--cyan-hi) var(--cyan-lo);
    margin-right: 3px;
    padding-top: 2px;
}

.hist-options .picked {
    color: var(--cyan);
}

.resolution {
    flex: 1;
    display: flex;
    flex-direction: column;
    padding: 1px 2px 3px;
    border: 1px solid #000;
    border-width: 0 1px 2px;
}

.resolution label {
    text-align: center;
}

.resolution output {
    padding: 4px 0 0 12px;
}

.resolution input {
    appearance: none;
    width: 100%;
    height: 15px;
    margin-top: auto;
    background: #84b8b8;
    border: 2px solid;
    border-color: var(--cyan-lo) var(--cyan-hi) var(--cyan-hi) var(--cyan-lo);
}

.resolution input::-webkit-slider-thumb {
    appearance: none;
    width: 30px;
    height: 11px;
    background: linear-gradient(90deg, transparent 13px, var(--cyan-lo) 13px 14px, var(--cyan-hi) 14px 15px, transparent 15px) var(--cyan);
    border: 2px solid;
    border-color: var(--cyan-hi) var(--cyan-lo) var(--cyan-lo) var(--cyan-hi);
}

.sash {
    display: flex;
    justify-content: flex-end;
    align-items: center;
    height: 9px;
    padding-right: 11px;
    background: linear-gradient(transparent 4px, var(--green-lo) 4px 5px, var(--green-hi) 5px 6px, transparent 6px);
}

.sash i {
    width: 9px;
    height: 9px;
    background: var(--green);
    border: 2px solid;
    border-color: var(--green-hi) var(--green-lo) var(--green-lo) var(--green-hi);
}

.map {
    flex: 1;
    display: grid;
    place-items: center;
    margin: 0 4px;
    padding-right: 2px;
    border: 2px solid;
    border-color: var(--green-lo) var(--green-hi) var(--green-hi) var(--green-lo);
    box-shadow: inset 0 0 0 1px #000;
}

.hist-info {
    display: flex;
    gap: 4px;
    padding: 1px 5px 3px 6px;
    border-bottom: 1px solid #000;
}

.hist-info .icon {
    height: 38px;
    margin-top: 2px;
}

.hist-info p {
    flex: 1;
    display: flex;
    align-items: center;
    height: 42px;
    margin: 0 -2px 0 -2px;
    padding-left: 2px;
    background: var(--cyan);
    border: 1px solid #000;
}

.wide {
    width: 38px;
    height: 38px;
    margin-top: 2px;
}

.wide svg {
    width: 30px;
    height: 30px;
}

.close-row {
    padding: 2px;
    background: var(--cyan);
}

.close-row .btn {
    width: 100%;
    height: 24px;
}

/* results viewer */
.viewer {
    right: 198px;
    top: 80px;
    width: 511px;
    height: 863px;
}

.check-name {
    padding: 2px;
    background: var(--cyan);
    border: 1px solid #000;
    border-width: 1px 0 2px;
}

.check-name .btn {
    width: 100%;
    height: 24px;
    padding-bottom: 2px;
    background: var(--green);
    border-color: var(--green-hi) var(--green-lo) var(--green-lo) var(--green-hi);
    font-family: var(--serif);
}

.view-body {
    flex: 1;
    min-height: 0;
    display: grid;
    grid-template-columns: 171px 1fr;
    gap: 2px;
    background: #000;
}

.layers,
.categories {
    min-width: 0;
    min-height: 0;
    display: flex;
    flex-direction: column;
    background: var(--green);
}

.layers-head {
    display: flex;
    height: 30px;
    padding: 2px;
    border-bottom: 1px solid #000;
    font-style: italic;
}

.layers-head .btn {
    width: 46px;
    height: 25px;
    font-weight: normal;
}

.layers-head .btn:last-child {
    width: 37px;
}

.layers-head span {
    flex: 1;
    margin: -2px 2px -2px;
    line-height: 29px;
    text-align: center;
    background: var(--cyan);
    border: solid #000;
    border-width: 0 1px;
}

.list-area {
    flex: 1;
    min-height: 0;
    display: grid;
    grid-template-columns: 1fr 15px;
    grid-template-rows: 1fr 15px;
    gap: 4px;
    padding: 1px 2px 2px 0;
}

.list-area .list {
    padding: 2px 3px 2px 2px;
}

.list-area .picked {
    color: var(--green);
}

.replace {
    height: 32px;
    padding: 2px 2px 1px 6px;
    border-top: 1px solid #000;
}

.replace .drop {
    height: 28px;
}

.cat-head {
    display: flex;
    align-items: center;
    height: 31px;
    padding: 0 2px 0 1px;
    background: linear-gradient(90deg, var(--green) 208px, var(--cyan) 208px);
}

.cat-head .btn {
    width: 205px;
    height: 27px;
    font-style: italic;
    margin-right: 1px;
}

.cat-head .drop {
    width: 60px;
    height: 27px;
    margin-left: auto;
}

.steps {
    display: flex;
    align-items: center;
    gap: 3px;
    padding: 0 2px 0 1px;
}

.steps .btn {
    width: 45px;
    height: 24px;
}

.steps .btn:first-child {
    width: 54px;
}

.steps label {
    margin: 0 2px 0 1px;
}

.steps input {
    flex: 1;
    min-width: 0;
    height: 24px;
    padding-left: 3px;
    border: 2px solid;
    border-color: var(--green-lo) var(--green-hi) var(--green-hi) var(--green-lo);
}

.zoom-row {
    display: flex;
    height: 34px;
    margin-top: 1px;
}

.boxed {
    display: flex;
    align-items: center;
    width: 124px;
    padding: 0 1px 0 6px;
    border: 1px solid #000;
}

.boxed .drop {
    flex: 1;
    height: 28px;
}

.sv {
    width: 97px;
    padding: 0;
    background: var(--cyan);
}

.sv div {
    display: flex;
    align-items: center;
    flex: 1;
    height: 100%;
    padding: 0 2px 0 6px;
    background: #1ce81c;
}

.sv .drop {
    background: #1ce81c;
    border-color: #90f490 #118a11 #118a11 #90f490;
}

.show-all {
    display: flex;
    gap: 3px;
    padding: 5px 0 0 4px;
}

.show-all input {
    appearance: none;
    width: 13px;
    height: 13px;
    margin-top: 2px;
    border: 1px solid;
    border-color: var(--green-hi) var(--green-lo) var(--green-lo) var(--green-hi);
}

.edit-row {
    display: flex;
    justify-content: flex-end;
    gap: 4px;
    padding: 1px 2px 2px;
}

.undo {
    width: 34px;
    height: 30px;
}

.undo svg {
    width: 28px;
    height: 24px;
}

.measure {
    text-align: center;
    line-height: 20px;
    border-top: 2px solid #000;
    border-bottom: 1px solid #000;
}

.erf {
    padding-left: 2px;
    line-height: 20px;
    background: var(--cream);
    border-bottom: 1px solid #000;
}

.view-foot {
    display: flex;
    gap: 4px;
    padding: 2px;
    background: var(--cyan);
}

.grow {
    flex: 1;
}
```
